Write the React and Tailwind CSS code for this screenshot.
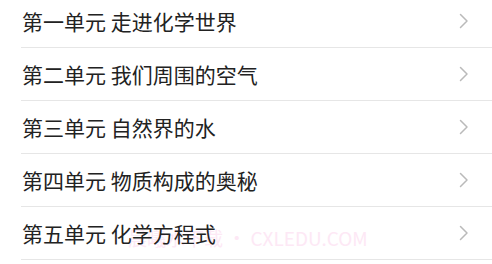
import React from "react";

const items = [
  "第一单元 走进化学世界",
  "第二单元 我们周围的空气",
  "第三单元 自然界的水",
  "第四单元 物质构成的奥秘",
  "第五单元 化学方程式",
];

function Chevron() {
  return (
    <svg width="10" height="16" viewBox="0 0 10 16" fill="none" className="shrink-0">
      <path d="M1.5 1.5 L8 8 L1.5 14.5" stroke="#bababa" strokeWidth="1.5" strokeLinecap="round" strokeLinejoin="round" />
    </svg>
  );
}

export default function App() {
  return (
    <div
      className="relative w-[492px] h-[264px] overflow-hidden bg-white"
      style={{ fontFamily: '"Noto Sans CJK SC", "Noto Sans", sans-serif' }}
    >
      <div className="pointer-events-none absolute left-[128px] top-[228px] text-[19px] leading-none text-[#fde8f5] whitespace-nowrap">
        晨曦水下载 • CXLEDU.COM
      </div>
      <div className="relative -mt-[5px] flex flex-col pl-[21px]">
        {items.map((t) => (
          <div
            key={t}
            className="flex h-[53px] items-center justify-between border-b border-[#e6e6e6] pl-[1px] pr-[23px]"
          >
            <span className="text-[21px] leading-none text-[#222222]">{t}</span>
            <Chevron />
          </div>
        ))}
      </div>
    </div>
  );
}
